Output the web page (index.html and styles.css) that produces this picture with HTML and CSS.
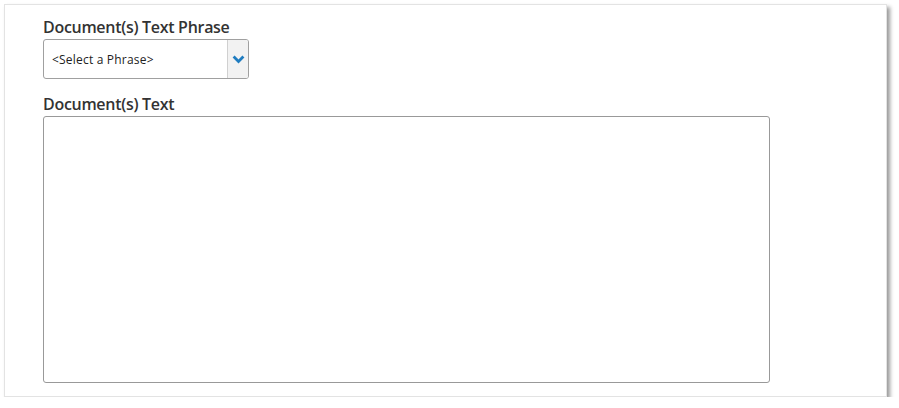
FILE: index.html
```html
<!DOCTYPE html>
<html>
<head>
<meta charset="utf-8">
<link rel="stylesheet" href="styles.css">
</head>
<body>
<div class="panel">
  <div class="field">
    <label class="label">Document(s) Text Phrase</label>
    <div class="select">
      <span class="select-text">&lt;Select a Phrase&gt;</span>
      <span class="select-btn">
        <svg width="13" height="9" viewBox="0 0 13 9"><path d="M1.6 1.6 L6.5 6.5 L11.4 1.6" fill="none" stroke="#1f7cc0" stroke-width="2.8"/></svg>
      </span>
    </div>
  </div>
  <div class="field">
    <label class="label">Document(s) Text</label>
    <div class="textarea"></div>
  </div>
</div>
</body>
</html>
```
FILE: styles.css
```css
html, body {
  margin: 0;
  padding: 0;
  background: #ffffff;
}
body {
  font-family: "Open Sans", "Noto Sans", sans-serif;
  color: #333333;
}
.panel {
  margin: 4px 0 0 4px;
  box-sizing: border-box;
  width: 883px;
  height: 393px;
  border: 1px solid #e3e3e3;
  box-shadow: 3px 3px 4px rgba(0,0,0,0.4);
  background: #fff;
  padding: 10px 0 0 38px;
}
.field {
  display: flex;
  flex-direction: column;
}
.label {
  font-size: 16px;
  font-weight: 600;
  line-height: 24px;
  letter-spacing: -0.3px;
  color: #333;
}
.select {
  display: flex;
  width: 206px;
  height: 40px;
  border: 1px solid #a0a0a0;
  border-radius: 3px;
  box-sizing: border-box;
  overflow: hidden;
  margin-bottom: 13px;
}
.select-text {
  flex: 1;
  font-size: 12px;
  letter-spacing: 0.2px;
  line-height: 38px;
  padding: 1px 0 0 8px;
  color: #222;
}
.select-btn {
  width: 20px;
  background: #f2f2f2;
  border-left: 1px solid #d0d0d0;
  display: flex;
  align-items: center;
  justify-content: center;
}
.textarea {
  width: 727px;
  height: 267px;
  border: 1px solid #999;
  border-radius: 3px;
  box-sizing: border-box;
}
```
